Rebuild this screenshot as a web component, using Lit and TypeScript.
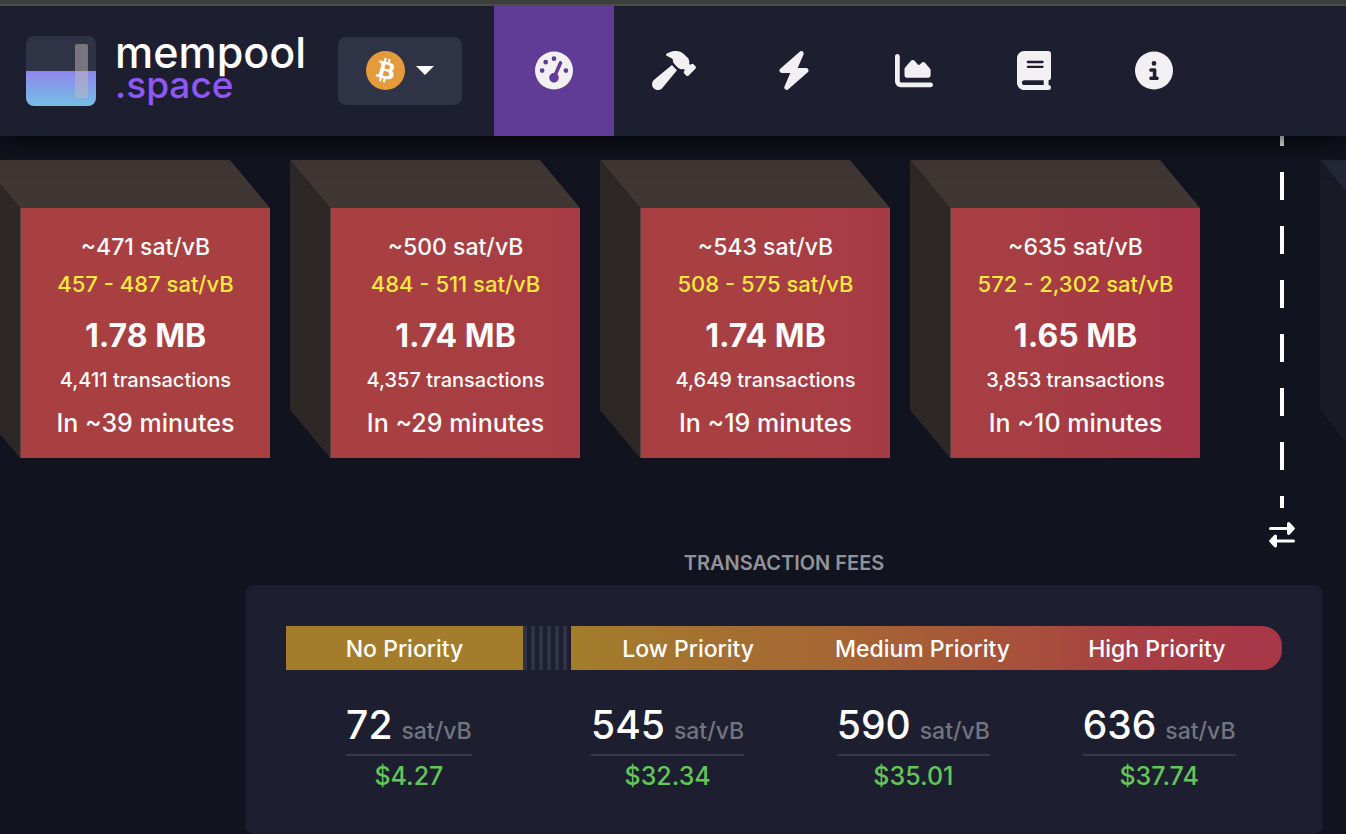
import { LitElement, html, svg, css } from "lit";
import { customElement, property } from "lit/decorators.js";

interface NavItem {
  label: string;
  width: number;
  viewBox: string;
  path: string;
  active?: boolean;
}

interface PendingBlock {
  median: string;
  range: string;
  size: string;
  count: string;
  eta: string;
  from: string;
  to: string;
}

interface Fee {
  label: string;
  rate: string;
  usd: string;
}

const NAV: NavItem[] = [
  {
    label: "Dashboard",
    width: 38,
    viewBox: "0 0 512 512",
    active: true,
    path: "M0 256a256 256 0 1 1 512 0A256 256 0 1 1 0 256zM288 96a32 32 0 1 0 -64 0 32 32 0 1 0 64 0zM256 416c35.3 0 64-28.7 64-64c0-17.4-6.9-33.1-18.1-44.6L366 161.7c5.3-12.1-.2-26.3-12.3-31.6s-26.3 .2-31.6 12.3L257.9 288c-.6 0-1.3 0-1.9 0c-35.3 0-64 28.7-64 64s28.7 64 64 64zM176 144a32 32 0 1 0 -64 0 32 32 0 1 0 64 0zM96 288a32 32 0 1 0 0-64 32 32 0 1 0 0 64zm352-32a32 32 0 1 0 -64 0 32 32 0 1 0 64 0z",
  },
  {
    label: "Mining",
    width: 44,
    viewBox: "0 0 576 512",
    path: "M413.5 237.5c-28.2 4.8-58.2-3.6-80-25.4l-38.1-38.1C280.4 159 272 138.8 272 117.6V105.5L192.3 62c-5.3-2.9-8.6-8.6-8.3-14.7s3.9-11.5 9.5-14l47.2-21C259.1 4.2 279 0 299.2 0h18.1c36.7 0 72 14 98.7 39.1l44.6 42c24.2 22.8 33.2 55.7 26.6 86L503 183l8-8c9.4-9.4 24.6-9.4 33.9 0l24 24c9.4 9.4 9.4 24.6 0 33.9l-88 88c-9.4 9.4-24.6 9.4-33.9 0l-24-24c-9.4-9.4-9.4-24.6 0-33.9l8-8-17.5-17.5zM27.4 377.1L260.9 182.6c3.5 4.9 7.5 9.6 11.8 14l38.1 38.1c6 6 12.4 11.2 19.2 15.7L134.9 484.6c-14.5 17.4-36 27.4-58.6 27.4C34.1 512 0 477.8 0 435.7c0-22.6 10.1-44.1 27.4-58.6z",
  },
  {
    label: "Lightning",
    width: 34,
    viewBox: "0 0 448 512",
    path: "M349.4 44.6c5.9-13.7 1.5-29.7-10.6-38.5s-28.6-8-39.9 1.8l-256 224c-10 8.8-13.6 22.9-8.9 35.3S50.7 288 64 288H175.5L98.6 467.4c-5.9 13.7-1.5 29.7 10.6 38.5s28.6 8 39.9-1.8l256-224c10-8.8 13.6-22.9 8.9-35.3s-16.6-20.7-30-20.7H272.5L349.4 44.6z",
  },
  {
    label: "Graphs",
    width: 38,
    viewBox: "0 0 512 512",
    path: "M64 64c0-17.7-14.3-32-32-32S0 46.3 0 64V400c0 44.2 35.8 80 80 80H480c17.7 0 32-14.3 32-32s-14.3-32-32-32H80c-8.8 0-16-7.2-16-16V64zm96 288H448c17.7 0 32-14.3 32-32V251.8c0-7.6-2.7-15-7.7-20.8l-65.8-76.8c-12.1-14.2-33.7-15-46.9-1.8l-21 21c-10 10-26.4 9.2-35.4-1.6l-39.2-47c-12.6-15.1-35.7-15.4-48.7-.6L135.9 215c-5.1 5.8-7.9 13.3-7.9 21.1v84c0 17.7 14.3 32 32 32z",
  },
  {
    label: "Documentation",
    width: 34,
    viewBox: "0 0 448 512",
    path: "M96 0C43 0 0 43 0 96V416c0 53 43 96 96 96H384h32c17.7 0 32-14.3 32-32s-14.3-32-32-32V384c17.7 0 32-14.3 32-32V32c0-17.7-14.3-32-32-32H384 96zm0 384H352v64H96c-17.7 0-32-14.3-32-32s14.3-32 32-32zm32-240c0-8.8 7.2-16 16-16H336c8.8 0 16 7.2 16 16s-7.2 16-16 16H144c-8.8 0-16-7.2-16-16zm16 48H336c8.8 0 16 7.2 16 16s-7.2 16-16 16H144c-8.8 0-16-7.2-16-16s7.2-16 16-16z",
  },
  {
    label: "About",
    width: 38,
    viewBox: "0 0 512 512",
    path: "M256 512A256 256 0 1 0 256 0a256 256 0 1 0 0 512zM216 336h24V272H216c-13.3 0-24-10.7-24-24s10.7-24 24-24h48c13.3 0 24 10.7 24 24v88h8c13.3 0 24 10.7 24 24s-10.7 24-24 24H216c-13.3 0-24-10.7-24-24s10.7-24 24-24zm40-208a32 32 0 1 1 0 64 32 32 0 1 1 0-64z",
  },
];

const BLOCKS: PendingBlock[] = [
  { median: "~471 sat/vB", range: "457 - 487 sat/vB", size: "1.78 MB", count: "4,411 transactions", eta: "In ~39 minutes", from: "#a84042", to: "#a84042" },
  { median: "~500 sat/vB", range: "484 - 511 sat/vB", size: "1.74 MB", count: "4,357 transactions", eta: "In ~29 minutes", from: "#a84042", to: "#a73c44" },
  { median: "~543 sat/vB", range: "508 - 575 sat/vB", size: "1.74 MB", count: "4,649 transactions", eta: "In ~19 minutes", from: "#a84042", to: "#a73b45" },
  { median: "~635 sat/vB", range: "572 - 2,302 sat/vB", size: "1.65 MB", count: "3,853 transactions", eta: "In ~10 minutes", from: "#a73e43", to: "#a43347" },
];

const FEES: Fee[] = [
  { label: "No Priority", rate: "72", usd: "$4.27" },
  { label: "Low Priority", rate: "545", usd: "$32.34" },
  { label: "Medium Priority", rate: "590", usd: "$35.01" },
  { label: "High Priority", rate: "636", usd: "$37.74" },
];

@customElement("site-header")
export class SiteHeader extends LitElement {
  static styles = css`
    :host {
      display: block;
      position: relative;
      z-index: 1;
      background: #1d1f31;
      border-top: 2px solid #494c49;
      box-shadow: 0 0 30px #000;
    }
    .bar {
      display: flex;
      align-items: center;
      height: 130px;
      padding-left: 26px;
    }
    .brand {
      display: flex;
      align-items: center;
      gap: 19px;
      width: 280px;
      margin-right: 32px;
      color: #fff;
      text-decoration: none;
    }
    .words {
      display: flex;
      flex-direction: column;
      font-size: 43px;
      line-height: 36px;
      font-weight: 500;
      padding-bottom: 8px;
    }
    .space {
      font-size: 37px;
      line-height: 30px;
      color: #9057f5;
    }
    .network {
      display: flex;
      align-items: center;
      justify-content: center;
      gap: 11px;
      width: 124px;
      height: 68px;
      margin-right: 32px;
      padding: 0 0 2px;
      border: 0;
      border-radius: 8px;
      background: #2e3446;
    }
    nav {
      display: flex;
      align-self: stretch;
    }
    .item {
      display: flex;
      align-items: center;
      justify-content: center;
      box-sizing: border-box;
      width: 120px;
      padding-bottom: 2px;
      color: #f2f0f2;
    }
    .active {
      background: #613c96;
    }
    .glyph {
      display: block;
      height: 39px;
      fill: currentColor;
    }
  `;

  render() {
    return html`
      <div class="bar">
        <a class="brand" href="#" aria-label="mempool.space">
          <svg width="70" height="70" viewBox="0 0 70 70" aria-hidden="true">
            <defs>
              <linearGradient id="water" x1="0" y1="0" x2="0" y2="1">
                <stop offset="0" stop-color="#8f86ee" />
                <stop offset="1" stop-color="#74c0e4" />
              </linearGradient>
              <clipPath id="tile"><rect width="70" height="70" rx="8" /></clipPath>
            </defs>
            <g clip-path="url(#tile)">
              <rect width="70" height="70" fill="#2e3446" />
              <rect y="35" width="70" height="35" fill="url(#water)" />
              <rect x="49" y="8" width="13" height="54" rx="2" fill="#c0b8b8" opacity="0.5" />
            </g>
          </svg>
          <span class="words"><span>mempool</span><span class="space">.space</span></span>
        </a>
        <button class="network" type="button" aria-label="Network: Bitcoin" aria-haspopup="menu">
          <svg width="39" height="39" viewBox="0 0 64 64" aria-hidden="true">
            <circle cx="32" cy="32" r="32" fill="#e59a3c" />
            <path fill="#fff" d="M46.11 27.441c.636-4.258-2.606-6.547-7.039-8.074l1.438-5.768-3.512-.875-1.4 5.616c-.922-.23-1.87-.447-2.812-.662l1.41-5.653-3.509-.875-1.439 5.766c-.764-.174-1.514-.346-2.242-.527l.004-.018-4.842-1.209-.934 3.75s2.605.597 2.55.634c1.422.355 1.68 1.296 1.636 2.042l-1.638 6.571c.098.025.225.061.365.117l-.371-.092-2.297 9.205c-.174.432-.615 1.08-1.609.834.035.051-2.552-.637-2.552-.637l-1.743 4.02 4.57 1.139c.85.213 1.683.436 2.502.646l-1.453 5.835 3.507.875 1.44-5.772c.957.26 1.887.5 2.797.726l-1.434 5.745 3.511.875 1.453-5.823c5.987 1.133 10.49.676 12.383-4.738 1.527-4.36-.075-6.875-3.225-8.516 2.294-.531 4.022-2.04 4.483-5.157zM38.087 38.69c-1.086 4.36-8.426 2.004-10.807 1.412l1.928-7.729c2.38.594 10.011 1.77 8.88 6.317zm1.085-11.312c-.99 3.966-7.1 1.951-9.083 1.457l1.748-7.01c1.983.494 8.367 1.416 7.335 5.553z" />
          </svg>
          <svg width="18" height="9" viewBox="0 0 18 9" aria-hidden="true"><path fill="#fff" d="M0 0h18L9 9z" /></svg>
        </button>
        <nav aria-label="Main">
          ${NAV.map(
            (n) => html`<a class="item ${n.active ? "active" : ""}" href="#" aria-label=${n.label}>
              <svg class="glyph" width=${n.width} viewBox=${n.viewBox} aria-hidden="true">${svg`<path fill-rule="evenodd" d=${n.path} />`}</svg>
            </a>`
          )}
        </nav>
      </div>
    `;
  }
}

@customElement("block-cube")
export class BlockCube extends LitElement {
  @property({ attribute: false }) block?: PendingBlock;

  static styles = css`
    :host {
      display: grid;
      flex: none;
      grid-template: 48px 250px / 40px 250px;
    }
    .top {
      grid-area: 1 / 1 / 2 / 3;
      background: #403634;
      clip-path: polygon(0 0, 250px 0, 100% 100%, 40px 100%);
    }
    .side {
      grid-area: 1 / 1 / 3 / 2;
      background: #2d2825;
      clip-path: polygon(0 0, 100% 48px, 100% 100%, 0 250px);
    }
    .mined-top {
      background: #232836;
    }
    .mined-side {
      background: #181b26;
    }
    .front {
      grid-area: 2 / 2;
      display: flex;
      flex-direction: column;
      align-items: center;
      box-sizing: border-box;
      padding-top: 22px;
      border-left: 1px solid #584244;
      color: #fafafa;
      font-weight: 500;
      white-space: nowrap;
    }
    .median {
      font-size: 23px;
      line-height: 34px;
    }
    .range {
      font-size: 22px;
      line-height: 40px;
      color: #f7e93f;
    }
    .size {
      font-size: 32px;
      line-height: 64px;
      font-weight: 700;
    }
    .count {
      font-size: 20px;
      line-height: 24px;
    }
    .eta {
      font-size: 25px;
      line-height: 62px;
    }
  `;

  render() {
    const b = this.block;
    if (!b) {
      return html`<div class="top mined-top"></div><div class="side mined-side"></div>`;
    }
    return html`
      <div class="top"></div>
      <div class="side"></div>
      <div class="front" style="background:linear-gradient(to right, ${b.from} 30%, ${b.to})">
        <span class="median">${b.median}</span>
        <span class="range">${b.range}</span>
        <span class="size">${b.size}</span>
        <span class="count">${b.count}</span>
        <span class="eta">${b.eta}</span>
      </div>
    `;
  }
}

@customElement("fee-panel")
export class FeePanel extends LitElement {
  static styles = css`
    :host {
      display: flex;
      flex-direction: column;
      flex: 1;
      margin: 0 23px 0 245px;
      font-weight: 500;
    }
    h2 {
      margin: 0;
      font-size: 20px;
      line-height: 30px;
      font-weight: 600;
      text-align: center;
      color: #929399;
    }
    .card {
      flex: 1;
      margin-top: 7px;
      padding: 40px 40px 24px;
      border: 1px solid #1a1c2b;
      border-radius: 8px;
      background: #1d1f31;
    }
    .scale {
      display: grid;
      grid-template: 44px / 1fr 48px 3fr;
      font-size: 23px;
      line-height: 46px;
      color: #fff;
      text-align: center;
      white-space: nowrap;
    }
    .none {
      background: #a37d2c;
    }
    .stripes {
      background: repeating-linear-gradient(to right, #2e3446 0 4px, transparent 4px 8px);
    }
    .ramp {
      display: flex;
      padding-right: 8px;
      border-radius: 0 20px 20px 0;
      background: linear-gradient(to right, #a37d2c, #a66434 40%, #a74f3c 65%, #a73e44 80%, #a73748);
    }
    .ramp span {
      flex: 1;
    }
    .values {
      display: flex;
      padding-top: 25px;
    }
    .fee {
      flex: 1;
      display: flex;
      flex-direction: column;
      align-items: center;
    }
    .fee:first-child {
      margin-right: 13px;
    }
    .rate {
      display: flex;
      align-items: baseline;
      gap: 9px;
      font-size: 39px;
      line-height: 59px;
      border-bottom: 2px solid #373a48;
      color: #fff;
    }
    .unit {
      font-size: 23px;
      line-height: 1;
      color: #74747e;
    }
    .usd {
      font-size: 25px;
      line-height: 40px;
      color: #65c558;
    }
  `;

  render() {
    const [none, ...rest] = FEES;
    return html`
      <h2>TRANSACTION FEES</h2>
      <div class="card">
        <div class="scale">
          <span class="none">${none.label}</span>
          <span class="stripes"></span>
          <div class="ramp">${rest.map((f) => html`<span>${f.label}</span>`)}</div>
        </div>
        <div class="values">
          ${FEES.map(
            (f) => html`<div class="fee">
              <div class="rate"><span>${f.rate}</span><span class="unit">sat/vB</span></div>
              <div class="usd">${f.usd}</div>
            </div>`
          )}
        </div>
      </div>
    `;
  }
}

@customElement("app-root")
export class AppRoot extends LitElement {
  static styles = css`
    :host {
      display: flex;
      flex-direction: column;
      box-sizing: border-box;
      min-height: 100vh;
      border-top: 4px solid #3c3f3c;
      overflow: hidden;
      background: #11131f;
      font-family: Inter, "Liberation Sans", sans-serif;
    }
    .chain {
      display: flex;
      overflow: hidden;
    }
    .pending {
      flex: 1;
      min-width: 0;
      display: flex;
      align-items: flex-start;
      justify-content: flex-end;
      gap: 20px;
      padding-top: 24px;
    }
    .divider {
      display: flex;
      flex-direction: column;
      align-items: center;
      gap: 14px;
      margin: 0 25px 0 69px;
    }
    .dashes {
      width: 4px;
      height: 372px;
      background: repeating-linear-gradient(to bottom, #fff 0 10px, transparent 10px 36px, #fff 36px 54px);
    }
    .swap {
      display: block;
      padding: 0;
      border: 0;
      background: none;
    }
    .swap svg {
      display: block;
    }
    .mined {
      width: 26px;
      padding-top: 24px;
      overflow: hidden;
    }
  `;

  render() {
    return html`
      <site-header></site-header>
      <section class="chain">
        <div class="pending">
          ${BLOCKS.map((b) => html`<block-cube .block=${b}></block-cube>`)}
        </div>
        <div class="divider">
          <div class="dashes"></div>
          <button class="swap" type="button" aria-label="Flip time direction">
            <svg width="26" height="26" viewBox="0 0 26 26" fill="#fff" aria-hidden="true">
              <path d="M1.5 5H18V2Q18 0 19.5 0 20.2 0 20.8 .6L25.4 5.4Q26.4 6.5 25.4 7.6L20.8 12.4Q18.4 14 18 11.2V8H1.5Q0 8 0 6.5T1.5 5Z" />
              <path d="M24.5 17.5H8V14.5Q8 12.5 6.5 12.5 5.8 12.5 5.2 13.1L.6 17.9Q-.4 19 .6 20.1L5.2 24.9Q7.6 26.6 8 23.8V20.5H24.5Q26 20.5 26 19T24.5 17.5Z" />
            </svg>
          </button>
        </div>
        <div class="mined"><block-cube></block-cube></div>
      </section>
      <fee-panel></fee-panel>
    `;
  }
}
